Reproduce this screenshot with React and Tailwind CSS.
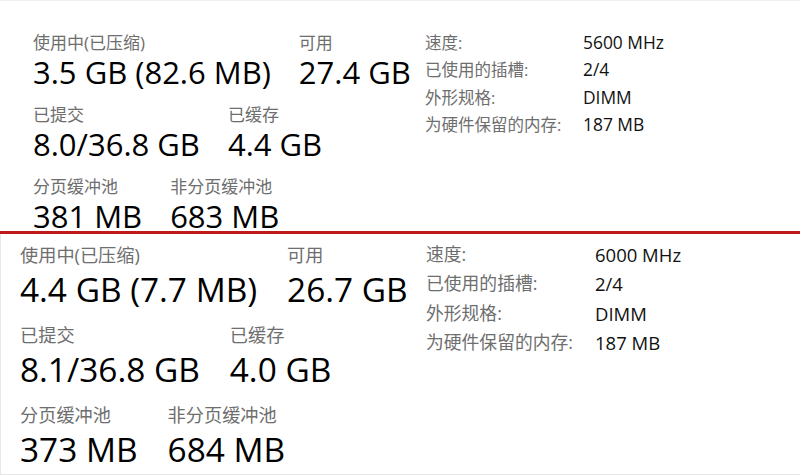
import React from 'react';

const FONT = { fontFamily: '"Open Sans", "Noto Sans CJK SC", sans-serif' };

const Stat = ({ label, value, size }) => {
  const big = size === 'lg';
  return (
    <div className="flex flex-col">
      <span
        className={
          big
            ? 'text-[18.2px] leading-[26px] text-[#6e6e6e] whitespace-nowrap'
            : 'text-[17px] leading-[22px] text-[#6e6e6e] whitespace-nowrap'
        }
      >
        {label}
      </span>
      <span
        className={
          big
            ? 'text-[33.4px] leading-[39px] mt-[2px] text-black whitespace-nowrap'
            : 'text-[31px] leading-[36px] text-black whitespace-nowrap'
        }
      >
        {value}
      </span>
    </div>
  );
};

const Panel = ({ data, size }) => {
  const big = size === 'lg';
  return (
    <div
      className={
        big
          ? 'flex h-[241px] overflow-hidden border-l border-b border-[#e8e8e8]'
          : 'flex h-[231px] overflow-hidden border-t border-[#f0f0f0]'
      }
    >
      <div
        className={
          big
            ? 'w-[425px] shrink-0 pl-[19px] pt-[8px] flex flex-col gap-[13px]'
            : 'w-[425px] shrink-0 pl-[33px] pt-[31px] flex flex-col gap-[14px]'
        }
      >
        {data.rows.map((row, i) => (
          <div key={i} className={big ? 'flex gap-[30px]' : 'flex gap-[28px]'}>
            {row.map((s) => (
              <Stat key={s[0]} label={s[0]} value={s[1]} size={size} />
            ))}
          </div>
        ))}
      </div>
      <div
        className={
          big
            ? 'flex-1 pt-[6px] grid grid-cols-[169px_auto] content-start text-[17.8px] leading-[29.3px]'
            : 'flex-1 pt-[28px] grid grid-cols-[158px_auto] content-start text-[16.5px] leading-[27.3px]'
        }
      >
        {data.specs.map((s) => (
          <React.Fragment key={s[0]}>
            <span className="text-[#6e6e6e] whitespace-nowrap">{s[0]}</span>
            <span className={big ? 'text-[#111] text-[18.5px]' : 'text-[#111] text-[17.4px]'}>{s[1]}</span>
          </React.Fragment>
        ))}
      </div>
    </div>
  );
};

const before = {
  rows: [
    [['使用中(已压缩)', '3.5 GB (82.6 MB)'], ['可用', '27.4 GB']],
    [['已提交', '8.0/36.8 GB'], ['已缓存', '4.4 GB']],
    [['分页缓冲池', '381 MB'], ['非分页缓冲池', '683 MB']],
  ],
  specs: [
    ['速度:', '5600 MHz'],
    ['已使用的插槽:', '2/4'],
    ['外形规格:', 'DIMM'],
    ['为硬件保留的内存:', '187 MB'],
  ],
};

const after = {
  rows: [
    [['使用中(已压缩)', '4.4 GB (7.7 MB)'], ['可用', '26.7 GB']],
    [['已提交', '8.1/36.8 GB'], ['已缓存', '4.0 GB']],
    [['分页缓冲池', '373 MB'], ['非分页缓冲池', '684 MB']],
  ],
  specs: [
    ['速度:', '6000 MHz'],
    ['已使用的插槽:', '2/4'],
    ['外形规格:', 'DIMM'],
    ['为硬件保留的内存:', '187 MB'],
  ],
};

export default function App() {
  return (
    <div className="w-[800px] h-[475px] bg-white overflow-hidden flex flex-col" style={FONT}>
      <Panel data={before} size="md" />
      <div className="h-[3px] bg-[#c0191b] shrink-0" />
      <Panel data={after} size="lg" />
    </div>
  );
}
